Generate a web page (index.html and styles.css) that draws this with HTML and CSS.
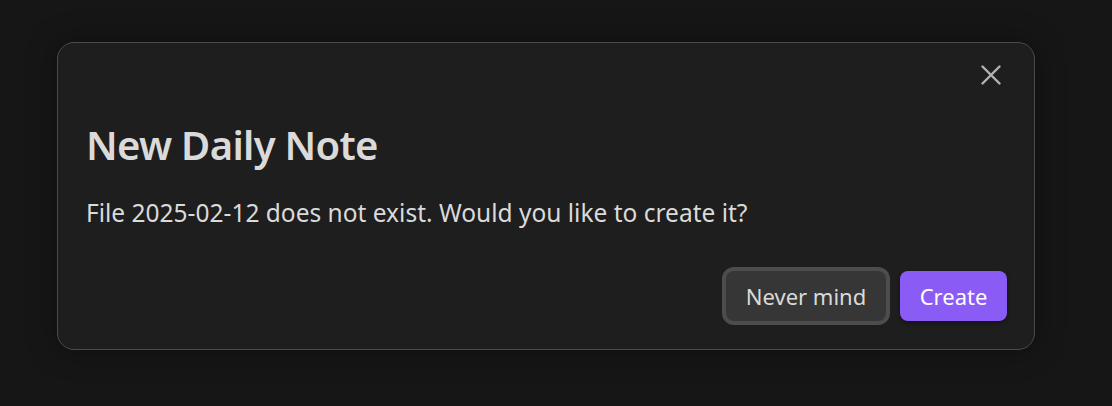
FILE: index.html
```html
<!DOCTYPE html>
<html lang="en">
<head>
<meta charset="utf-8">
<title>New Daily Note</title>
<link rel="stylesheet" href="styles.css">
</head>
<body>
<div class="modal">
  <button class="modal-close" aria-label="Close">
    <svg width="20" height="20" viewBox="0 0 20 20" fill="none" stroke="currentColor" stroke-width="2.4" stroke-linecap="round">
      <path d="M1.5 1.5 L18.5 18.5 M18.5 1.5 L1.5 18.5"/>
    </svg>
  </button>
  <h1 class="modal-title">New Daily Note</h1>
  <p class="modal-content">File 2025-02-12 does not exist. Would you like to create it?</p>
  <div class="modal-buttons">
    <button class="btn btn-secondary">Never mind</button>
    <button class="btn btn-cta">Create</button>
  </div>
</div>
</body>
</html>
```
FILE: styles.css
```css
html, body {
  margin: 0;
  padding: 0;
  background: #161616;
  height: 100%;
}
body {
  padding: 42px 0 0 57px;
  box-sizing: border-box;
  font-family: "Noto Sans", "Open Sans", sans-serif;
  color: #dadada;
}
.modal {
  position: relative;
  box-sizing: border-box;
  width: 978px;
  height: 308px;
  background: #1e1e1e;
  border: 1px solid #4a4a4a;
  border-radius: 17px;
  padding: 78px 27px 28px 28px;
  display: flex;
  flex-direction: column;
  box-shadow: 0 0 30px rgba(0,0,0,0.35);
}
.modal-close {
  position: absolute;
  top: 21px;
  right: 32px;
  width: 22px;
  height: 22px;
  padding: 1px;
  border: 0;
  background: transparent;
  color: #b3b3b3;
  display: flex;
  align-items: center;
  justify-content: center;
}
.modal-title {
  margin: 0;
  font-size: 40px;
  font-weight: 600;
  line-height: 48px;
  color: #dadada;
  letter-spacing: -0.7px;
}
.modal-content {
  margin: 26px 0 0 0;
  font-size: 24.5px;
  line-height: 36px;
  color: #dadada;
}
.modal-buttons {
  margin-top: auto;
  display: flex;
  justify-content: flex-end;
  gap: 14px;
}
.btn {
  height: 50px;
  border-radius: 8px;
  border: 0;
  font-family: inherit;
  font-size: 22px;
  padding: 0;
  white-space: nowrap;
  cursor: pointer;
}
.btn-secondary {
  width: 160px;
  background: #363636;
  color: #dadada;
  box-shadow: 0 0 0 4px #4d4d4d;
}
.btn-cta {
  width: 107px;
  background: #8a5cf5;
  color: #ffffff;
  box-shadow: 0 2px 4px rgba(0,0,0,0.35);
}
```
